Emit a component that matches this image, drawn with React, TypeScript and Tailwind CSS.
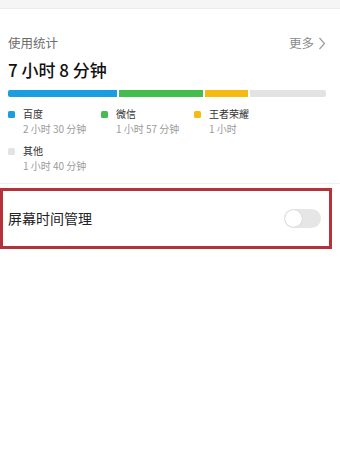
import React from 'react';

const font = { fontFamily: '"Noto Sans CJK SC", "Noto Sans", sans-serif' };

const legend = [
  { name: '百度', time: '2 小时 30 分钟', color: 'bg-[#1a9ee0]' },
  { name: '微信', time: '1 小时 57 分钟', color: 'bg-[#42bd4e]' },
  { name: '王者荣耀', time: '1 小时', color: 'bg-[#f5bb12]' },
  { name: '其他', time: '1 小时 40 分钟', color: 'bg-[#e3e3e3]' },
];

const App: React.FC = () => {
  return (
    <div className="w-[340px] h-[466px] bg-white overflow-hidden" style={font}>
      <div className="h-[9px] bg-[#f5f5f5] border-b border-[#ececec]" />
      <div className="px-2 pt-[24px]">
        <div className="flex items-center justify-between h-[20px]">
          <span className="text-[12.5px] text-[#6b6b6b] leading-none">使用统计</span>
          <span className="flex items-center gap-1 text-[12.5px] text-[#8a8a8a] leading-none pr-[6px]">
            更多
            <svg width="8" height="13" viewBox="0 0 8 13" fill="none">
              <path d="M1.5 1l5 5.5-5 5.5" stroke="#9a9a9a" strokeWidth="1.2" />
            </svg>
          </span>
        </div>
        <div className="mt-[6px] text-[17px] leading-[22px] text-[#111] font-medium">7 小时 8 分钟</div>
        <div className="mt-[9px] flex h-[7px] w-[318px] gap-[2px]">
          <div className="w-[109px] bg-[#1a9ee0] rounded-l-[2px]" />
          <div className="w-[84px] bg-[#42bd4e]" />
          <div className="w-[43px] bg-[#f5bb12]" />
          <div className="flex-1 bg-[#e3e3e3] rounded-r-[2px]" />
        </div>
        <div className="mt-[9px] grid grid-cols-[93px_93px_93px] gap-y-[7px]">
          {legend.map((l) => (
            <div key={l.name} className="flex">
              <div className={`w-[7px] h-[7px] mt-[5px] rounded-[1.5px] ${l.color}`} />
              <div className="ml-[8px]">
                <div className="text-[10px] leading-[16px] text-[#333]">{l.name}</div>
                <div className="text-[10px] leading-[14px] text-[#9a9a9a]">{l.time}</div>
              </div>
            </div>
          ))}
        </div>
      </div>
      <div className="mt-[10px] border-t border-[#efefef]" />
      <div className="mt-[4px] w-[332px] h-[61px] border-[3px] border-[#b5323b] flex items-center justify-between pl-[5px] pr-[8px]">
        <span className="text-[14px] text-[#222]">屏幕时间管理</span>
        <div className="w-[37px] h-[19px] rounded-full bg-[#e6e6e6] p-[1px]">
          <div className="w-[17px] h-[17px] rounded-full bg-white shadow-[0_0_1px_rgba(0,0,0,0.25)]" />
        </div>
      </div>
    </div>
  );
};

export default App;
